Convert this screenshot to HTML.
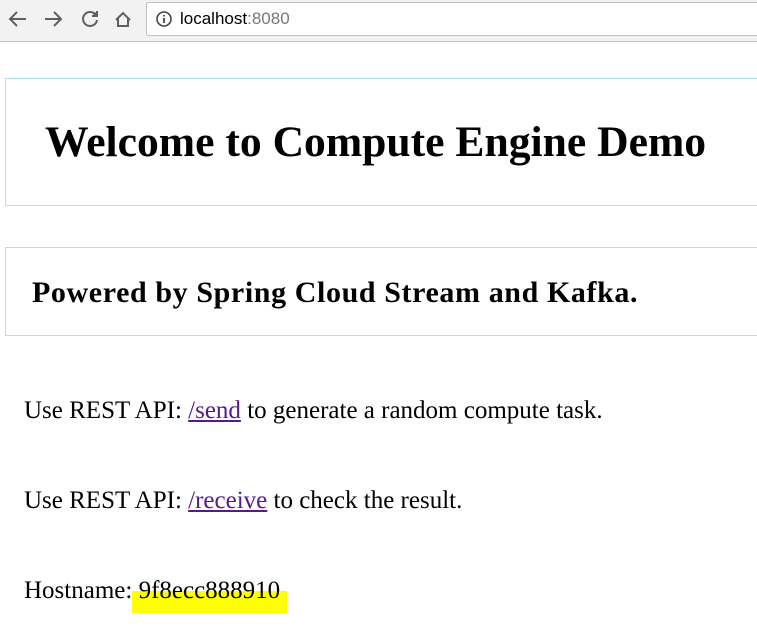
<!DOCTYPE html>
<html><head><style>
body{margin:0;width:757px;height:639px;overflow:hidden;background:#fff;font-family:"Liberation Serif",serif;position:relative}
.bar{position:absolute;left:0;top:0;width:757px;height:41px;background:#f2f2f2;border-bottom:1px solid #c4c4c4}
.addr{position:absolute;left:146px;top:2px;width:620px;height:32px;background:#fff;border:1px solid #c0c0c0;border-radius:2px;font-family:"Liberation Sans",sans-serif;font-size:17px;line-height:32px}
.box{position:absolute;left:5px;width:760px;border:1px solid #d4d4d4}
.t{position:absolute;left:24px;font-size:25px;white-space:nowrap}
a{color:#551a8b}
</style></head><body>
<div class="bar">
<svg width="140" height="41" style="position:absolute;left:0;top:0" fill="none" stroke="#5f5f5f" stroke-width="2">
<path d="M26 19H10M17 12l-7 7 7 7"/>
<path d="M45 19h16M54 12l7 7-7 7"/>
<path d="M95 14a7 7 0 1 0 2 6"/><path d="M97 11v5h-5" fill="#5f5f5f"/>
<path d="M116 20l7-7 7 7M118 18v8h10v-8"/>
</svg>
<div class="addr"><svg width="20" height="20" style="position:absolute;left:8px;top:7px"><circle cx="9" cy="9" r="7" fill="none" stroke="#444" stroke-width="1.6"/><path d="M9 8v5M9 5v1.5" stroke="#444" stroke-width="1.8"/></svg><span style="position:absolute;left:33px;top:0">localhost<span style="color:#777">:8080</span></span></div>
</div>
<div class="box" style="top:78px;height:126px;border-top-color:#a8e0e6"><div style="position:absolute;left:39px;top:38px;font-size:43.6px;font-weight:bold;white-space:nowrap">Welcome to Compute Engine Demo</div></div>
<div class="box" style="top:247px;height:87px"><div style="position:absolute;left:26px;top:28px;font-size:30px;font-weight:bold;white-space:nowrap;letter-spacing:0.6px">Powered by Spring Cloud Stream and Kafka.</div></div>
<div class="t" style="top:397px">Use REST API: <a href="#">/send</a> to generate a random compute task.</div>
<div class="t" style="top:487px">Use REST API: <a href="#">/receive</a> to check the result.</div>
<div style="position:absolute;left:132px;top:591px;width:155px;height:22px;background:#ffff00"></div>
<div class="t" style="top:577px">Hostname: 9f8ecc888910</div>
</body></html>
